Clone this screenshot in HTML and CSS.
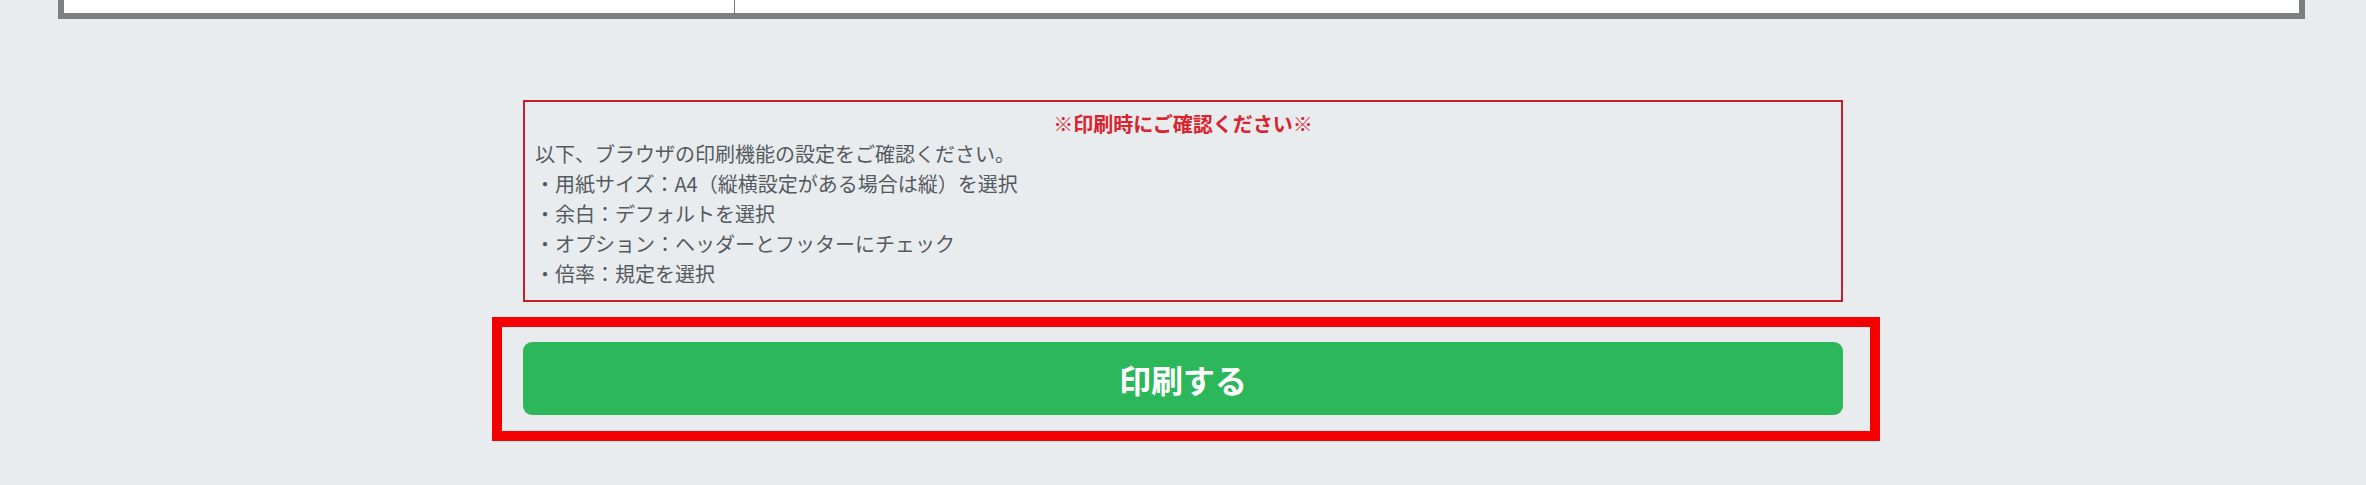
FILE: index.html
```html
<!DOCTYPE html>
<html lang="ja">
	<head>
		<meta charset="utf-8">
		<title>印刷</title>
		<link rel="stylesheet" href="styles.css">
	</head>
	<body>
		<div class="sheet">
			<div class="sheet-col"></div>
			<div class="sheet-col"></div>
		</div>

		<div class="print-area">
			<div class="notice">
				<p class="notice-title">※印刷時にご確認ください※</p>
				<p>以下、ブラウザの印刷機能の設定をご確認ください。</p>
				<p>・用紙サイズ：A4（縦横設定がある場合は縦）を選択</p>
				<p>・余白：デフォルトを選択</p>
				<p>・オプション：ヘッダーとフッターにチェック</p>
				<p>・倍率：規定を選択</p>
			</div>
			<div class="print-frame">
				<a href="javascript:;" class="btn-print">印刷する</a>
			</div>
		</div>
	</body>
</html>
```

FILE: styles.css
```css
*{margin:0;padding:0;box-sizing:border-box}
a{text-decoration: none;}
body{
	background: #e8ecef;
	font-family: "Noto Sans CJK JP", "Noto Sans", sans-serif;
	color: #555a60;
	height: 485px;
	overflow: hidden;
}
/* 上の表の下端 */
.sheet{
	display: grid;
	grid-template-columns: 670px 1fr;
	height: 19px;
	margin: 0 61px 0 58px;
	background: #fff;
	border: 6px solid #7d7e80;
	border-top: 0;
}
.sheet-col + .sheet-col{
	border-left: 1px solid #77787a;
}
.print-area{
	width: 1320px;
	margin: 81px auto 0;
}
.notice{
	border: 2px solid #c3202b;
	padding: 7px 10px 11px;
	font-size: 20px;
	line-height: 30px;
}
.notice-title{
	text-align: center;
	color: #d9232d;
	font-weight: bold;
}
/* 印刷ボタンを囲む赤枠 */
.print-frame{
	margin: 15px -37px 0 -31px;
	border: 10px solid #f50000;
	padding: 15px 27px 16px 21px;
}
.btn-print{
	display: flex;
	justify-content: center;
	align-items: center;
	height: 73px;
	border-radius: 9px;
	background: #2db75b;
	color: #fff;
	font-size: 32px;
	font-weight: bold;
}
```
